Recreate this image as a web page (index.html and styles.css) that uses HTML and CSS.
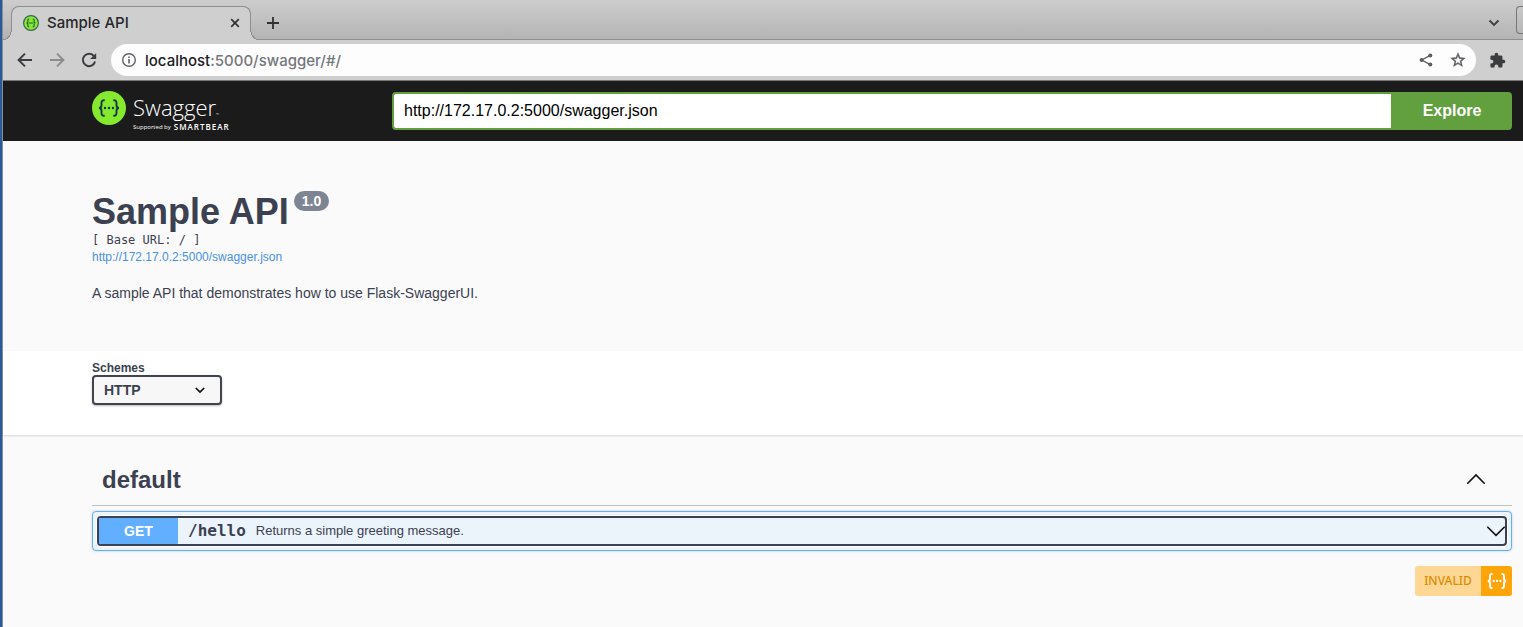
FILE: index.html
```html
<!DOCTYPE html>
<html lang="en">
<head>
<meta charset="utf-8">
<title>Sample API</title>
<link rel="stylesheet" href="styles.css">
</head>
<body>
<div class="window">
  <header class="browser">
    <div class="tab-strip">
      <div class="tab">
        <svg class="favicon" viewBox="0 0 16 16" width="16" height="16" aria-hidden="true"><circle cx="8" cy="8" r="7.4" fill="#85ea2d" stroke="#38665a" stroke-width="1.2"/><path d="M6.2 4.2Q4.9 4 4.9 5.3V6.8Q4.9 8 3.5 8Q4.9 8 4.9 9.2V10.7Q4.9 12 6.2 11.8M9.8 4.2Q11.1 4 11.1 5.3V6.8Q11.1 8 12.5 8Q11.1 8 11.1 9.2V10.7Q11.1 12 9.8 11.8M5.8 8H10.2" fill="none" stroke="#24564c" stroke-width="1.1"/></svg>
        <span class="tab-title">Sample API</span>
        <button class="icon-button tab-close" aria-label="Close tab"><svg viewBox="0 0 10 10" width="10" height="10"><path d="M1.2 1.2L8.8 8.8M8.8 1.2L1.2 8.8" stroke="#303134" stroke-width="1.7"/></svg></button>
      </div>
      <button class="icon-button new-tab" aria-label="New tab"><svg viewBox="0 0 12 12" width="12" height="12"><path d="M6 0V12M0 6H12" stroke="#303134" stroke-width="1.8"/></svg></button>
      <button class="icon-button tab-search" aria-label="Search tabs"><svg viewBox="0 0 12 8" width="12" height="8"><path d="M1.5 1.5L6 6L10.5 1.5" fill="none" stroke="#3c3d40" stroke-width="1.8"/></svg></button>
      <button class="window-control" aria-label="Minimize"></button>
    </div>
    <div class="toolbar">
      <button class="icon-button" aria-label="Back"><svg viewBox="0 0 16 16" width="16" height="16"><path d="M15 8H2M8 1.6L1.6 8L8 14.4" fill="none" stroke="#3b3c3f" stroke-width="2"/></svg></button>
      <button class="icon-button" aria-label="Forward"><svg viewBox="0 0 16 16" width="16" height="16"><path d="M1 8H14M8 1.6L14.4 8L8 14.4" fill="none" stroke="#8c8c8c" stroke-width="2"/></svg></button>
      <button class="icon-button" aria-label="Reload"><svg viewBox="0 0 16 16" width="16" height="16"><path d="M13.1 4.3A6.2 6.2 0 1 0 14.1 9.6" fill="none" stroke="#3b3c3f" stroke-width="2"/><path d="M15.2 1V7.1H9.1Z" fill="#3b3c3f"/></svg></button>
      <div class="address">
        <svg viewBox="0 0 16 16" width="16" height="16" aria-hidden="true"><circle cx="8" cy="8" r="6.3" fill="none" stroke="#5f6368" stroke-width="1.4"/><path d="M8 7V11.5M8 4.4V6" stroke="#5f6368" stroke-width="1.6"/></svg>
        <span class="url"><span class="url-host">localhost</span>:5000/swagger/#/</span>
        <button class="icon-button" aria-label="Share"><svg viewBox="0 0 16 16" width="16" height="16"><path d="M12.2 3.4L3.8 8L12.2 12.6" fill="none" stroke="#5a5c60" stroke-width="1.3"/><circle cx="12.3" cy="3.4" r="2" fill="#5a5c60"/><circle cx="3.6" cy="8" r="2" fill="#5a5c60"/><circle cx="12.3" cy="12.6" r="2" fill="#5a5c60"/></svg></button>
        <button class="icon-button" aria-label="Bookmark"><svg viewBox="1 1 22 22" width="16" height="16"><path d="M22 9.24l-7.19-.62L12 2 9.19 8.63 2 9.24l5.46 4.73L5.82 21 12 17.27 18.18 21l-1.63-7.03L22 9.24zM12 15.4l-3.76 2.27 1-4.28-3.32-2.88 4.38-.38L12 6.1l1.71 4.04 4.38.38-3.32 2.88 1 4.28L12 15.4z" fill="#5a5c60" stroke="#5a5c60" stroke-width=".5"/></svg></button>
      </div>
      <button class="icon-button extensions" aria-label="Extensions"><svg viewBox="0 0 24 24" width="17" height="17"><path d="M20.5 11H19V7c0-1.1-.9-2-2-2h-4V3.500C13 2.120 11.880 1 10.500 1S8 2.120 8 3.500V5H4c-1.100 0-1.990.9-1.990 2v3.800H3.500c1.490 0 2.700 1.210 2.700 2.700s-1.210 2.700-2.700 2.700H2V20c0 1.100.9 2 2 2h3.800v-1.500c0-1.490 1.210-2.700 2.700-2.700 1.490 0 2.700 1.210 2.700 2.700V22H17c1.100 0 2-.9 2-2v-4h1.500c1.380 0 2.500-1.120 2.500-2.500S21.880 11 20.500 11z" fill="#3b3c3f"/></svg></button>
    </div>
  </header>

  <div class="topbar gutter">
    <a class="logo" href="#/" aria-label="Swagger, supported by SmartBear">
      <svg viewBox="0 0 34 34" width="34" height="34" aria-hidden="true"><circle cx="17" cy="17" r="17" fill="#85ea2d"/><path d="M12.700 9.300Q9.500 8.900 9.500 12V14.300Q9.500 17 7 17Q9.500 17 9.500 19.700V22Q9.500 25.100 12.700 24.700M21.300 9.300Q24.500 8.900 24.500 12V14.300Q24.500 17 27 17Q24.500 17 24.500 19.700V22Q24.500 25.100 21.300 24.700" fill="none" stroke="#173647" stroke-width="1.900"/><g fill="#173647"><circle cx="13" cy="17" r="1.200"/><circle cx="17" cy="17" r="1.200"/><circle cx="21" cy="17" r="1.200"/></g></svg>
      <span class="wordmark">
        <span class="brand">Swagger<span class="tm">™</span></span>
        <span class="support">Supported by <b class="smartbear">SMARTBEAR</b></span>
      </span>
    </a>
    <form class="explore">
      <input class="explore-url" type="text" aria-label="API definition URL" value="http://172.17.0.2:5000/swagger.json">
      <button class="explore-button" type="button">Explore</button>
    </form>
  </div>

  <main>
    <section class="info gutter">
      <div class="title-row"><h1 class="title">Sample API</h1><span class="version">1.0</span></div>
      <pre class="base-url">[ Base URL: / ]</pre>
      <a class="spec-link" href="#/">http://172.17.0.2:5000/swagger.json</a>
      <p class="description">A sample API that demonstrates how to use Flask-SwaggerUI.</p>
    </section>

    <section class="schemes gutter">
      <label class="schemes-label" for="scheme">Schemes</label>
      <div class="select-box">
        <select class="scheme-select" id="scheme"><option>HTTP</option></select>
        <svg class="select-arrow" viewBox="0 0 10 7" width="10" height="7" aria-hidden="true"><path d="M.8 1L5 5L9.200 1" fill="none" stroke="#111" stroke-width="1.700"/></svg>
      </div>
    </section>

    <section class="operations gutter">
      <div class="tag">
        <h2 class="tag-name">default</h2>
        <button class="icon-button" aria-label="Collapse section"><svg viewBox="0 0 20 20" width="20" height="20"><path d="M1.800 13.200L10 5L18.200 13.200" fill="none" stroke="#111" stroke-width="1.600" stroke-linecap="round"/></svg></button>
      </div>
      <div class="opblock">
        <button class="operation">
          <span class="method">GET</span>
          <span class="path">/hello</span>
          <span class="summary">Returns a simple greeting message.</span>
          <svg class="expand" viewBox="0 0 20 20" width="20" height="20" aria-hidden="true"><path d="M2.800 6.200L11 14.400L19.200 6.200" fill="none" stroke="#111" stroke-width="1.600" stroke-linecap="round"/></svg>
        </button>
      </div>
      <a class="badge" href="#/">
        <span class="badge-text">INVALID</span>
        <span class="badge-icon"><svg viewBox="0 0 20 16" width="20" height="16" aria-hidden="true"><path d="M5.500 1Q3 .7 3 3V5.500Q3 8 .8 8Q3 8 3 10.500V13Q3 15.300 5.500 15M14.500 1Q17 .7 17 3V5.500Q17 8 19.200 8Q17 8 17 10.500V13Q17 15.300 14.500 15" fill="none" stroke="#fff" stroke-width="1.900"/><g fill="#fff"><circle cx="6.600" cy="8" r="1.150"/><circle cx="10" cy="8" r="1.150"/><circle cx="13.400" cy="8" r="1.150"/></g></svg></span>
      </a>
    </section>
  </main>
</div>
</body>
</html>
```

FILE: styles.css
```css
* { box-sizing: border-box; }

body {
  margin: 0;
  background: #fafafa;
  color: #3b4151;
  font-family: "Liberation Sans", Arial, sans-serif;
}

button, input, select { font: inherit; }

.window {
  min-height: 100vh;
  border-left: 2px solid #2a5a9b;
  box-shadow: inset 1px 0 #8a8f96;
  padding-left: 1px;
}

.icon-button {
  display: flex;
  align-items: center;
  justify-content: center;
  padding: 0;
  border: 0;
  background: none;
}

/* Browser chrome */
.browser { font-family: Inter, sans-serif; }

.tab-strip {
  display: flex;
  align-items: center;
  height: 40px;
  padding-left: 8px;
  background: linear-gradient(#cdcdcd, #b4b4b4);
  border-bottom: 1px solid #8e8e8e;
}

.tab {
  position: relative;
  display: flex;
  align-items: center;
  width: 240px;
  height: 34px;
  align-self: flex-end;
  margin-bottom: -1px;
  padding: 0 10px 2px 11px;
  border: 1px solid #8e8e8e;
  border-bottom: 0;
  border-radius: 8px 8px 0 0;
  background: #cfcfcf;
}

.tab::before, .tab::after {
  content: "";
  position: absolute;
  bottom: 0;
  width: 9px;
  height: 8px;
}

.tab::before {
  left: -9px;
  background: radial-gradient(circle at 0 0, transparent 7px, #8e8e8e 7px 8px, #cfcfcf 8px);
}

.tab::after {
  right: -9px;
  background: radial-gradient(circle at 100% 0, transparent 7px, #8e8e8e 7px 8px, #cfcfcf 8px);
}

.tab-title {
  flex: 1;
  margin-left: 8px;
  font-size: 15px;
  font-weight: 500;
  color: #26272a;
}

.new-tab { margin-left: 16px; padding-top: 6px; }
.tab-search { margin-left: auto; padding-top: 6px; }

.window-control {
  width: 7px;
  height: 28px;
  margin-left: 16px;
  padding: 0;
  border: 1px solid #777;
  border-right: 0;
  border-radius: 4px 0 0 4px;
  background: none;
}

.toolbar {
  display: flex;
  align-items: center;
  gap: 16px;
  height: 41px;
  padding: 0 17px 0 14px;
  background: #cfcfcf;
  border-bottom: 1px solid #777;
}

.address {
  flex: 1;
  display: flex;
  align-items: center;
  gap: 16px;
  height: 32px;
  margin-left: -2px;
  padding: 0 10px;
  border-radius: 16px;
  background: #fdfdfd;
}

.url {
  flex: 1;
  margin-left: -8px;
  font-size: 15px;
  font-weight: 500;
  color: #74777b;
}

.url-host { color: #202124; }
.extensions { margin-left: -3px; }

/* Swagger page */
.gutter { padding-left: 89px; padding-right: 11px; }

.topbar {
  display: flex;
  align-items: center;
  height: 60px;
  background: #1b1b1b;
}

.logo {
  display: flex;
  flex: 0 0 300px;
  gap: 7px;
  height: 40px;
  color: #fff;
  text-decoration: none;
  font-family: "Open Sans", sans-serif;
}

.wordmark { display: flex; flex-direction: column; }
.brand { font-size: 22px; font-weight: 300; line-height: 32px; }
.tm { font-size: 4px; line-height: 1; }

.support {
  display: flex;
  align-items: center;
  gap: 3px;
  font-size: 6px;
  line-height: 8px;
  white-space: nowrap;
}

.smartbear { font-size: 8px; font-weight: 600; letter-spacing: 1px; }

.explore { display: flex; flex: 1; height: 38px; }

.explore-url {
  flex: 1;
  min-width: 0;
  padding: 0 10px;
  border: 2px solid #62a03f;
  border-right: 0;
  border-radius: 4px 0 0 4px;
  background: #fff;
  color: #000;
  font-size: 16px;
}

.explore-button {
  width: 121px;
  padding: 0 0 0 1px;
  border: 0;
  border-radius: 0 4px 4px 0;
  background: #62a03f;
  color: #fff;
  font-size: 16px;
  font-weight: 700;
}

.info { padding-top: 50px; padding-bottom: 50px; }
.title-row { display: flex; align-items: flex-start; gap: 5px; }
.title { margin: 0; font-size: 36px; line-height: 41px; }

.version {
  padding: 2px 8px;
  border-radius: 10px;
  background: #7d8492;
  color: #fff;
  font-size: 14px;
  font-weight: 700;
  line-height: 16px;
}

.base-url {
  margin: 0;
  font-family: "DejaVu Sans Mono", monospace;
  font-size: 12px;
  line-height: 16px;
}

.spec-link {
  display: block;
  color: #4990e2;
  font-size: 12px;
  line-height: 18px;
  text-decoration: none;
}

.description { margin: 19px 0 0; font-size: 14px; line-height: 16px; }

.schemes {
  padding-top: 10px;
  padding-bottom: 30px;
  background: #fff;
  box-shadow: 0 1px 2px rgba(0, 0, 0, .15);
}

.schemes-label {
  display: block;
  font-size: 12px;
  font-weight: 700;
  line-height: 14px;
}

.select-box { display: inline-grid; width: 130px; vertical-align: top; }

.scheme-select {
  grid-area: 1 / 1;
  height: 30px;
  padding: 0 10px;
  border: 2px solid #41444e;
  border-radius: 4px;
  background: #f7f7f7;
  box-shadow: 0 1px 2px rgba(0, 0, 0, .25);
  color: #3b4151;
  font-size: 14px;
  font-weight: 700;
  appearance: none;
}

.select-arrow {
  grid-area: 1 / 1;
  align-self: center;
  justify-self: end;
  margin-right: 17px;
  pointer-events: none;
}

.operations {
  display: flex;
  flex-direction: column;
  padding-top: 20px;
}

.tag {
  display: flex;
  align-items: center;
  justify-content: space-between;
  height: 51px;
  padding: 0 26px 0 10px;
  border-bottom: 1px solid #bfc1c5;
}

.tag-name { margin: 0; font-size: 24px; }

.opblock {
  margin-top: 5px;
  padding: 4px;
  border: 1px solid #61affe;
  border-radius: 4px;
  background: #ebf3fb;
  box-shadow: 0 0 3px rgba(0, 0, 0, .19);
}

.operation {
  display: flex;
  align-items: center;
  width: 100%;
  height: 30px;
  padding: 0;
  border: 2px solid #3b4151;
  border-radius: 4px;
  background: #ebf3fb;
  box-shadow: 0 0 0 1px #fff;
  color: #3b4151;
  text-align: left;
}

.method {
  width: 79px;
  border-radius: 1px;
  background: #61affe;
  color: #fff;
  font-size: 14px;
  font-weight: 700;
  line-height: 26px;
  text-align: center;
}

.path {
  padding: 0 10px 2px;
  font-family: "DejaVu Sans Mono", monospace;
  font-size: 16px;
  font-weight: 700;
}

.summary { flex: 1; padding-bottom: 2px; font-size: 13px; }

.badge {
  display: flex;
  align-self: flex-end;
  height: 30px;
  margin-top: 15px;
  overflow: hidden;
  border-radius: 3px;
  background: #ffd795;
  color: #dc8c00;
  font-family: "Noto Sans", sans-serif;
  font-size: 12px;
  font-weight: 500;
  line-height: 30px;
  text-decoration: none;
}

.badge-text { width: 66px; text-align: center; }

.badge-icon {
  display: flex;
  align-items: center;
  justify-content: center;
  width: 31px;
  background: #ffa50a;
}
```
